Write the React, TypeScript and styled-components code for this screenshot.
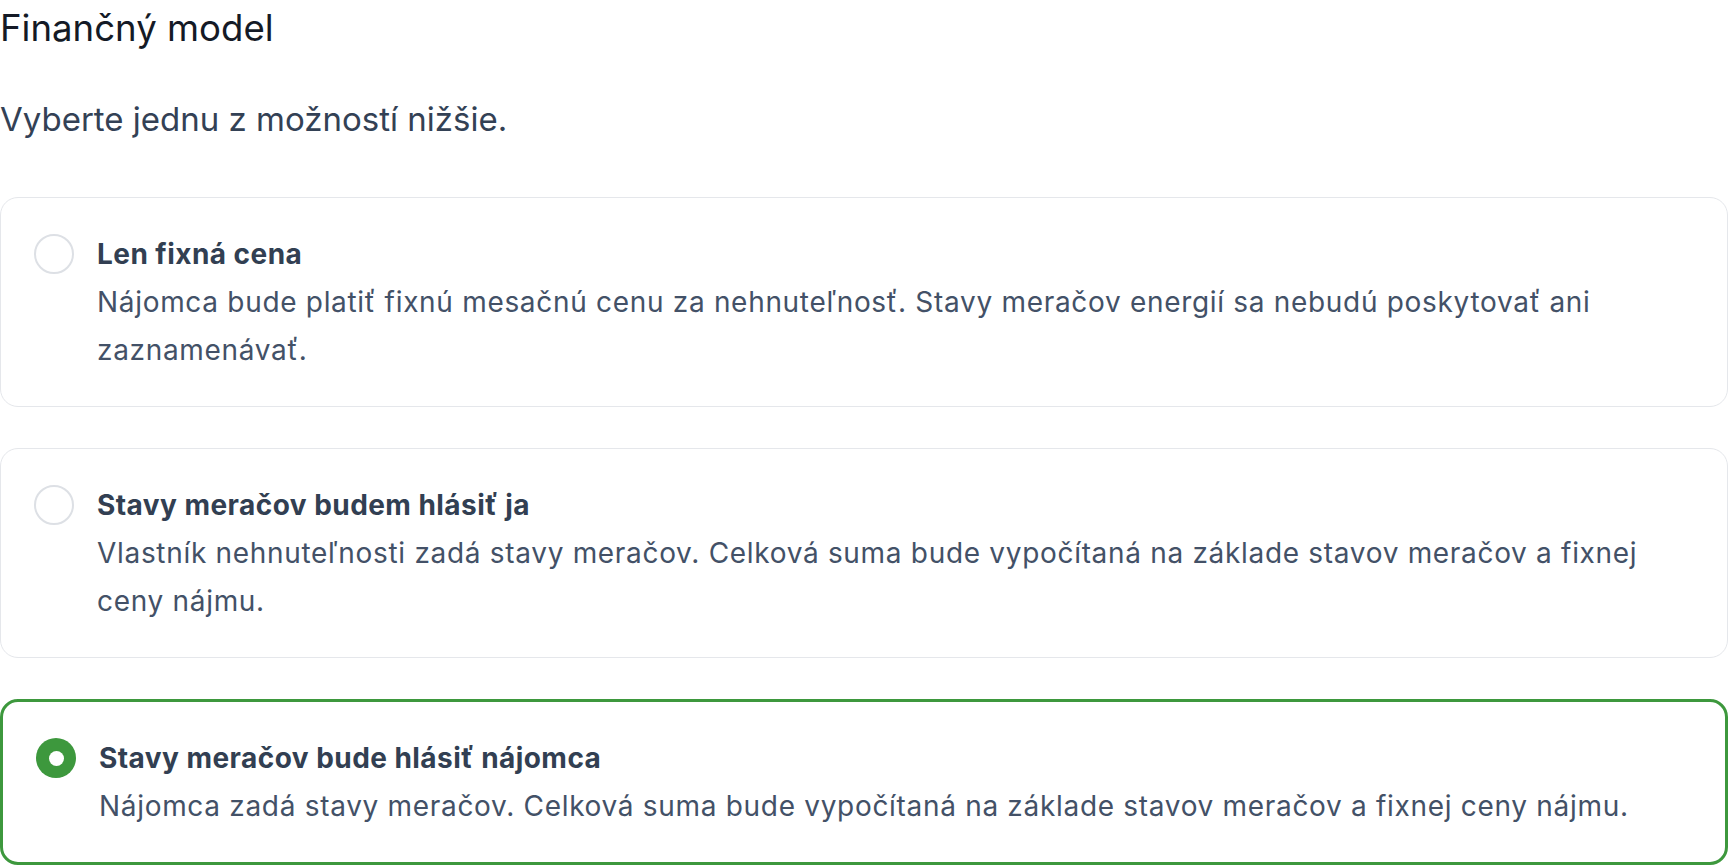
import React, { useState } from "react";
import styled, { createGlobalStyle } from "styled-components";

const GlobalStyle = createGlobalStyle`
  * {
    box-sizing: border-box;
  }
  body {
    margin: 0;
    background: #ffffff;
    font-family: Inter, "Noto Sans", "Liberation Sans", sans-serif;
  }
`;

type Option = {
  id: string;
  title: string;
  description: string;
};

const options: Option[] = [
  {
    id: "fixed",
    title: "Len fixná cena",
    description:
      "Nájomca bude platiť fixnú mesačnú cenu za nehnuteľnosť. Stavy meračov energií sa nebudú poskytovať ani zaznamenávať.",
  },
  {
    id: "owner",
    title: "Stavy meračov budem hlásiť ja",
    description:
      "Vlastník nehnuteľnosti zadá stavy meračov. Celková suma bude vypočítaná na základe stavov meračov a fixnej ceny nájmu.",
  },
  {
    id: "tenant",
    title: "Stavy meračov bude hlásiť nájomca",
    description:
      "Nájomca zadá stavy meračov. Celková suma bude vypočítaná na základe stavov meračov a fixnej ceny nájmu.",
  },
];

const Page = styled.div`
  display: flex;
  flex-direction: column;
  width: 100%;
  padding-top: 6px;
`;

const Heading = styled.h1`
  margin: 0;
  font-size: 36.6px;
  line-height: 44px;
  font-weight: 400;
  color: #141a26;
`;

const Subtitle = styled.p`
  margin: 49px 0 0;
  font-size: 33px;
  line-height: 40px;
  font-weight: 400;
  color: #334155;
`;

const OptionList = styled.div`
  display: flex;
  flex-direction: column;
  gap: 41px;
  margin-top: 58px;
`;

const Card = styled.div<{ $selected: boolean }>`
  display: flex;
  align-items: flex-start;
  gap: 23px;
  padding: 32px 33px;
  border: ${({ $selected }) => ($selected ? "3px solid #3d983d" : "1px solid #e5e7eb")};
  border-radius: 18px;
  background: #ffffff;
  cursor: pointer;
`;

const Radio = styled.span<{ $checked: boolean }>`
  flex: 0 0 auto;
  display: flex;
  align-items: center;
  justify-content: center;
  width: 40px;
  height: 40px;
  margin-top: 4px;
  border-radius: 50%;
  border: ${({ $checked }) => ($checked ? "none" : "2px solid #dde0e5")};
  background: ${({ $checked }) => ($checked ? "#3d983d" : "#ffffff")};

  &::after {
    content: "";
    display: ${({ $checked }) => ($checked ? "block" : "none")};
    width: 15px;
    height: 15px;
    border-radius: 50%;
    background: #ffffff;
  }
`;

const CardText = styled.div`
  display: flex;
  flex-direction: column;
  flex: 1;
  min-width: 0;
`;

const CardTitle = styled.span`
  font-size: 28px;
  line-height: 48px;
  font-weight: 700;
  letter-spacing: 0.45px;
  color: #323f52;
`;

const CardDescription = styled.span`
  font-size: 28px;
  line-height: 48px;
  font-weight: 400;
  letter-spacing: 0.69px;
  color: #435167;
`;

const App: React.FC = () => {
  const [selected, setSelected] = useState("tenant");

  return (
    <Page>
      <GlobalStyle />
      <Heading>Finančný model</Heading>
      <Subtitle>Vyberte jednu z možností nižšie.</Subtitle>
      <OptionList role="radiogroup">
        {options.map((option) => (
          <Card
            key={option.id}
            role="radio"
            aria-checked={selected === option.id}
            $selected={selected === option.id}
            onClick={() => setSelected(option.id)}
          >
            <Radio $checked={selected === option.id} />
            <CardText>
              <CardTitle>{option.title}</CardTitle>
              <CardDescription>{option.description}</CardDescription>
            </CardText>
          </Card>
        ))}
      </OptionList>
    </Page>
  );
};

export default App;
